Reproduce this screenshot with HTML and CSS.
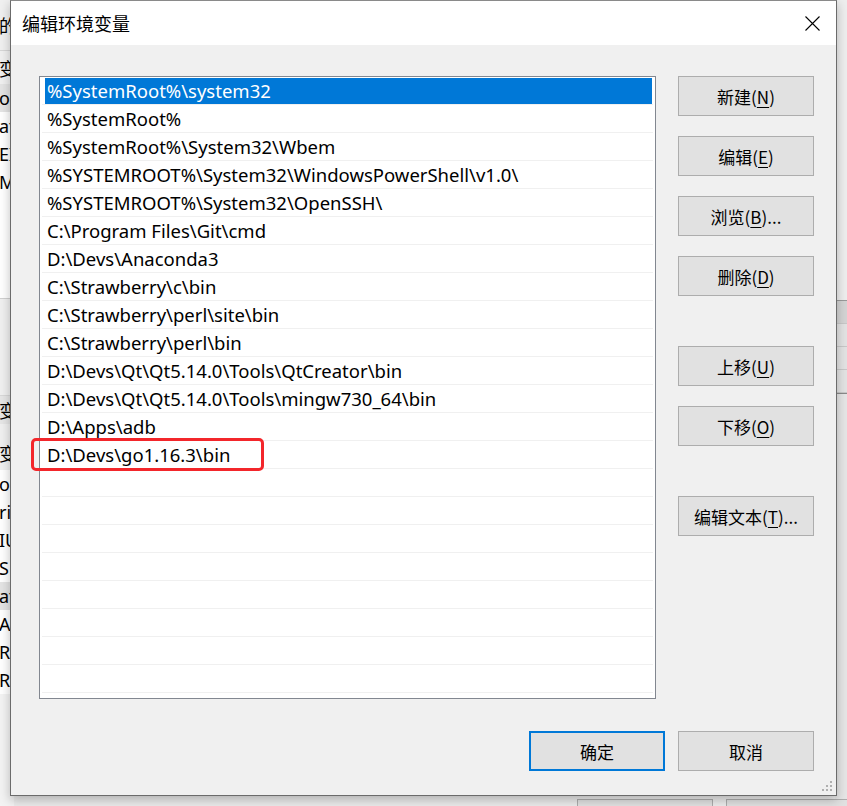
FILE: index.html
```html
<!DOCTYPE html>
<html lang="zh-CN">
<head>
<meta charset="utf-8">
<title>编辑环境变量</title>
<link rel="stylesheet" href="styles.css">
</head>
<body>
<div class="desktop">
  <div class="backwin">
    <div class="back-left">
      <div class="bl-row bl-top"><span class="bl-text">的</span></div>
      <div class="bl-row bl-head"><span class="bl-text">变量</span></div>
      <div class="bl-row bl-grey"><span class="bl-text">on</span></div>
      <div class="bl-row"><span class="bl-text">at</span></div>
      <div class="bl-row"><span class="bl-text">EI</span></div>
      <div class="bl-row"><span class="bl-text">M</span></div>
      <div class="bl-empty"></div>
      <div class="bl-gap"></div>
      <div class="bl-row bl-sec"><span class="bl-text">变</span></div>
      <div class="bl-row bl-head2"><span class="bl-text">变量</span></div>
      <div class="bl-row"><span class="bl-text">o</span></div>
      <div class="bl-row"><span class="bl-text">ri</span></div>
      <div class="bl-row"><span class="bl-text">IU</span></div>
      <div class="bl-row"><span class="bl-text">S</span></div>
      <div class="bl-row bl-grey"><span class="bl-text">at</span></div>
      <div class="bl-row"><span class="bl-text">A</span></div>
      <div class="bl-row"><span class="bl-text">R</span></div>
      <div class="bl-row"><span class="bl-text">R</span></div>
    </div>
    <div class="back-right">
      <div class="br-top"></div>
      <div class="br-row br-dark"></div>
      <div class="br-row"></div>
      <div class="br-row"></div>
      <div class="br-row"></div>
      <div class="br-rest"></div>
    </div>
    <div class="back-buttons">
      <div class="back-btn"></div>
      <div class="back-btn"></div>
    </div>
  </div>

  <div class="dialog">
    <div class="titlebar">
      <span class="title">编辑环境变量</span>
      <span class="close">
        <svg width="15" height="15" viewBox="0 0 15 15"><path d="M0.5 0.5 L14.5 14.5 M14.5 0.5 L0.5 14.5" stroke="#000" stroke-width="1.1" fill="none"/></svg>
      </span>
    </div>
    <div class="body">
      <div class="main">
        <div class="list">
          <div class="row sel"><div class="cell">%SystemRoot%\system32</div></div>
          <div class="row"><div class="cell">%SystemRoot%</div></div>
          <div class="row"><div class="cell">%SystemRoot%\System32\Wbem</div></div>
          <div class="row"><div class="cell">%SYSTEMROOT%\System32\WindowsPowerShell\v1.0\</div></div>
          <div class="row"><div class="cell">%SYSTEMROOT%\System32\OpenSSH\</div></div>
          <div class="row"><div class="cell">C:\Program Files\Git\cmd</div></div>
          <div class="row"><div class="cell">D:\Devs\Anaconda3</div></div>
          <div class="row"><div class="cell">C:\Strawberry\c\bin</div></div>
          <div class="row"><div class="cell">C:\Strawberry\perl\site\bin</div></div>
          <div class="row"><div class="cell">C:\Strawberry\perl\bin</div></div>
          <div class="row"><div class="cell">D:\Devs\Qt\Qt5.14.0\Tools\QtCreator\bin</div></div>
          <div class="row"><div class="cell">D:\Devs\Qt\Qt5.14.0\Tools\mingw730_64\bin</div></div>
          <div class="row"><div class="cell">D:\Apps\adb</div></div>
          <div class="row marked"><div class="cell">D:\Devs\go1.16.3\bin</div><span class="redbox"></span></div>
          <div class="row"><div class="cell"></div></div>
          <div class="row"><div class="cell"></div></div>
          <div class="row"><div class="cell"></div></div>
          <div class="row"><div class="cell"></div></div>
          <div class="row"><div class="cell"></div></div>
          <div class="row"><div class="cell"></div></div>
          <div class="row"><div class="cell"></div></div>
          <div class="row"><div class="cell"></div></div>
        </div>
        <div class="side">
          <button class="btn">新建(<u>N</u>)</button>
          <button class="btn">编辑(<u>E</u>)</button>
          <button class="btn">浏览(<u>B</u>)...</button>
          <button class="btn">删除(<u>D</u>)</button>
          <button class="btn group">上移(<u>U</u>)</button>
          <button class="btn">下移(<u>O</u>)</button>
          <button class="btn group">编辑文本(<u>T</u>)...</button>
        </div>
      </div>
      <div class="footer">
        <button class="btn default">确定</button>
        <button class="btn">取消</button>
      </div>
      <div class="grip">
        <svg width="11" height="11" viewBox="0 0 11 11" fill="#b0b0b0">
          <rect x="8" y="0" width="2" height="2"/>
          <rect x="4" y="4" width="2" height="2"/><rect x="8" y="4" width="2" height="2"/>
          <rect x="0" y="8" width="2" height="2"/><rect x="4" y="8" width="2" height="2"/><rect x="8" y="8" width="2" height="2"/>
        </svg>
      </div>
    </div>
  </div>
</div>
</body>
</html>
```

FILE: styles.css
```css
html, body {
  margin: 0;
  padding: 0;
}
body {
  width: 847px;
  height: 806px;
  overflow: hidden;
  background: #f0f0f0;
  font-family: "Noto Sans", "Noto Sans CJK SC", sans-serif;
}
.desktop {
  position: relative;
  width: 847px;
  height: 806px;
  overflow: hidden;
  background: #ececec;
}

/* background window pieces */
.backwin {
  position: absolute;
  left: 0;
  top: 0;
  width: 847px;
  height: 806px;
}
.back-left {
  position: absolute;
  left: 0;
  top: 0;
  width: 14px;
  height: 806px;
  background: #f3f3f3;
  display: flex;
  flex-direction: column;
  font-family: "Noto Sans", "Noto Sans CJK SC", sans-serif;
  font-size: 18px;
  color: #000;
}
.bl-row {
  height: 28px;
  flex: none;
  display: flex;
  align-items: center;
  background: #fff;
  white-space: nowrap;
}
.bl-text {
  margin-left: -1px;
}
.bl-top {
  height: 50px;
  background: #f0f0f0;
  border-bottom: 1px solid #d6d6d6;
}
.bl-head {
  height: 33px;
  background: #f0f0f0;
}
.bl-grey {
  background: #e4e4e4;
}
.bl-empty {
  height: 102px;
  flex: none;
  background: #fff;
}
.bl-gap {
  height: 96px;
  flex: none;
  background: #f0f0f0;
  border-top: 1px solid #d0d0d0;
  border-bottom: 1px solid #d8d8d8;
}
.bl-sec {
  height: 28px;
  background: #e6e6e6;
}
.bl-head2 {
  height: 46px;
  align-items: flex-end;
  padding-bottom: 4px;
  box-sizing: border-box;
  background: #f0f0f0;
}
.back-right {
  position: absolute;
  right: 0;
  top: 0;
  width: 12px;
  height: 806px;
  display: flex;
  flex-direction: column;
  background: #f0f0f0;
}
.br-top {
  height: 300px;
  border-bottom: 1px solid #9a9a9a;
  background: #eeeeee;
}
.br-row {
  height: 22px;
  border-bottom: 1px solid #c8c8c8;
  background: #e3e3e3;
}
.br-dark {
  background: #d4d4d4;
}
.br-rest {
  flex: 1;
  border-top: 1px solid #8a8a8a;
  background: #e6e6e6;
}
.back-buttons {
  position: absolute;
  left: 577px;
  top: 799px;
  display: flex;
  gap: 13px;
}
.back-btn {
  width: 134px;
  height: 20px;
  background: #e1e1e1;
  border: 1px solid #adadad;
}

/* dialog */
.dialog {
  position: absolute;
  left: 10px;
  top: 0;
  width: 827px;
  height: 796px;
  box-sizing: border-box;
  border: 1px solid #6b6b6b;
  border-top-color: #8a8a8a;
  background: #f0f0f0;
  box-shadow: 0 4px 10px rgba(0, 0, 0, 0.25);
  display: flex;
  flex-direction: column;
}
.titlebar {
  height: 44px;
  flex: none;
  background: #fff;
  display: flex;
  align-items: center;
  justify-content: space-between;
  padding: 0 16px 0 11px;
}
.title {
  font-family: "Noto Sans CJK SC", sans-serif;
  font-size: 18px;
  color: #000;
  margin-top: -1px;
}
.close {
  display: flex;
  width: 15px;
  height: 15px;
  margin-top: 1px;
}
.body {
  flex: 1;
  position: relative;
  display: flex;
  flex-direction: column;
  padding: 31px 22px 0 28px;
}
.main {
  display: flex;
  gap: 22px;
}
.list {
  width: 617px;
  height: 623px;
  box-sizing: border-box;
  border: 1px solid #828790;
  background: #fff;
  padding: 0 2px;
}
.row {
  position: relative;
  height: 28px;
  box-sizing: border-box;
  border-bottom: 1px solid #f0f0f0;
  display: flex;
}
.cell {
  flex: 1;
  margin: 1px 1px 0 3px;
  padding-left: 2px;
  display: flex;
  align-items: center;
  font-family: "Noto Sans", sans-serif;
  font-size: 18.5px;
  line-height: 1;
  color: #000;
  white-space: nowrap;
  overflow: hidden;
}
.row.sel .cell {
  background: #0078d7;
  color: #fff;
}
.redbox {
  position: absolute;
  left: -11px;
  top: -3px;
  width: 233px;
  height: 33px;
  box-sizing: border-box;
  border: 3px solid #f3262b;
  border-radius: 5px;
}
.side {
  display: flex;
  flex-direction: column;
  gap: 20px;
}
.btn {
  width: 136px;
  height: 40px;
  box-sizing: border-box;
  background: #e1e1e1;
  border: 1px solid #adadad;
  font-family: "Noto Sans CJK SC", sans-serif;
  font-size: 17px;
  color: #000;
  padding: 0;
  margin: 0;
}
.btn u {
  text-decoration-thickness: 1px;
  text-underline-offset: 3px;
}
.btn.group {
  margin-top: 30px;
}
.footer {
  display: flex;
  justify-content: flex-end;
  gap: 13px;
  margin-top: 32px;
}
.btn.default {
  border: 2px solid #0078d7;
}
.grip {
  position: absolute;
  right: 3px;
  bottom: 3px;
  display: flex;
}
```
